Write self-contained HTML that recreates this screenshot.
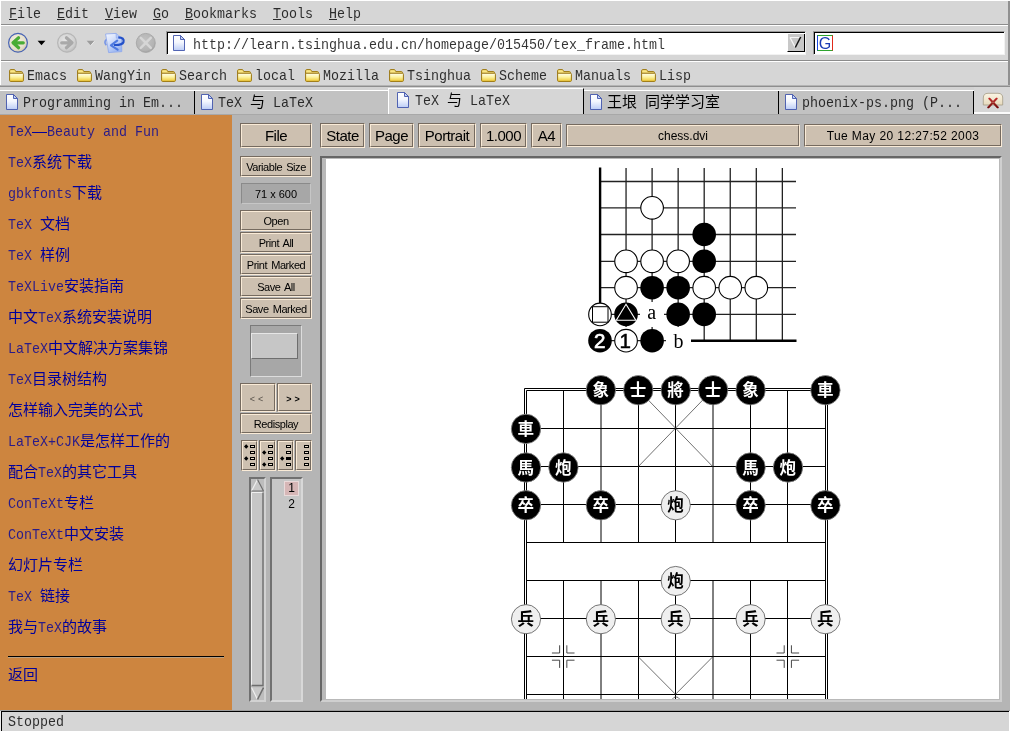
<!DOCTYPE html>
<html lang="zh"><head><meta charset="utf-8"><title>TeX 与 LaTeX</title>
<style>
*{margin:0;padding:0;box-sizing:border-box}
html,body{width:1010px;height:732px;overflow:hidden;background:#d6d6d6}
.t,.btn,.s,svg{will-change:transform}
body{position:relative;font-family:"Liberation Mono","Noto Serif CJK SC",monospace;font-size:16px;color:#000}
.a{position:absolute}
.t{position:absolute;white-space:pre;height:18px;line-height:18px;font-size:0}
.m{display:inline-block;opacity:.8;font:15px/18px "Liberation Mono",monospace;transform:scaleX(.8887);transform-origin:0 50%;white-space:pre;vertical-align:top;height:18px;overflow:visible}
.c{display:inline-block;position:relative;top:-2px;font:16px/18px "Liberation Sans","Noto Sans CJK SC",sans-serif;white-space:pre;vertical-align:top;height:18px;text-align:center;overflow:visible}
.u{text-decoration:underline}
.s{font-family:"Liberation Sans",sans-serif}
.btn{position:absolute;word-spacing:1.5px;background:#cdc0b0;border:1px solid;border-color:#756a5f #faebd7 #faebd7 #756a5f;font-family:"Liberation Sans",sans-serif;text-align:center;white-space:nowrap}
.btn i{position:absolute;left:0;top:0;right:0;bottom:0;border:1px solid;border-color:#faebd7 #756a5f #756a5f #faebd7;font-style:normal;display:block}
.lnk .m,.lnk .c{color:#00009c}
.q{font:700 16.5px "Liberation Sans","Noto Sans CJK SC",sans-serif}
</style></head>
<body>
<div class="a" style="left:0px;top:0px;width:1010px;height:1px;background:#fff;"></div>
<div class="a" style="left:0px;top:0px;width:1px;height:88px;background:#fff;"></div>
<div class="a" style="left:1008px;top:1px;width:2px;height:85px;background:#909090;"></div>
<div class="a" style="left:1px;top:24px;width:1007px;height:1px;background:#8c8c8c;"></div>
<div class="a" style="left:1px;top:25px;width:1007px;height:1px;background:#fff;"></div>
<div class="a" style="left:1px;top:60px;width:1007px;height:1px;background:#8c8c8c;"></div>
<div class="a" style="left:1px;top:61px;width:1007px;height:1px;background:#fff;"></div>
<div class="a" style="left:0px;top:85px;width:1010px;height:1px;background:#b4b4b4;"></div>
<div class="a" style="left:0px;top:86px;width:1010px;height:1px;background:#8e8e8e;"></div>
<div class="a" style="left:0px;top:87px;width:1010px;height:3px;background:#d3d3d3;"></div>
<div class="t " style="left:9px;top:6px"><span class="m" style="width:32px"><span class="u">F</span>ile</span></div>
<div class="t " style="left:57px;top:6px"><span class="m" style="width:32px"><span class="u">E</span>dit</span></div>
<div class="t " style="left:105px;top:6px"><span class="m" style="width:32px"><span class="u">V</span>iew</span></div>
<div class="t " style="left:153px;top:6px"><span class="m" style="width:16px"><span class="u">G</span>o</span></div>
<div class="t " style="left:185px;top:6px"><span class="m" style="width:72px"><span class="u">B</span>ookmarks</span></div>
<div class="t " style="left:273px;top:6px"><span class="m" style="width:40px"><span class="u">T</span>ools</span></div>
<div class="t " style="left:329px;top:6px"><span class="m" style="width:32px"><span class="u">H</span>elp</span></div>
<svg class="a" style="left:0;top:26px" width="170" height="34" viewBox="0 26 170 34">
<defs>
<radialGradient id="gb" cx="42%" cy="38%" r="65%"><stop offset="0" stop-color="#f6f2e4"/><stop offset=".7" stop-color="#e6dfca"/><stop offset="1" stop-color="#cfc6aa"/></radialGradient>
<radialGradient id="gg" cx="42%" cy="38%" r="65%"><stop offset="0" stop-color="#e6e6e6"/><stop offset=".7" stop-color="#d2d2d2"/><stop offset="1" stop-color="#bcbcbc"/></radialGradient>
<radialGradient id="gs" cx="45%" cy="40%" r="65%"><stop offset="0" stop-color="#c2c2c2"/><stop offset=".75" stop-color="#b4b4b4"/><stop offset="1" stop-color="#9c9c9c"/></radialGradient>
<linearGradient id="pg" x1="0" y1="0" x2="0" y2="1"><stop offset="0" stop-color="#fff"/><stop offset=".45" stop-color="#f4f7fe"/><stop offset="1" stop-color="#bccdf6"/></linearGradient>
<linearGradient id="fg" x1="0" y1="0" x2="0" y2="1"><stop offset="0" stop-color="#fffef0"/><stop offset=".45" stop-color="#fdf4a4"/><stop offset="1" stop-color="#f0c832"/></linearGradient>
<linearGradient id="gp" x1="0" y1="0" x2=".6" y2="1"><stop offset="0" stop-color="#f4f7ff"/><stop offset=".35" stop-color="#dbe5fc"/><stop offset="1" stop-color="#9cb6f0"/></linearGradient>
</defs>
<circle cx="18" cy="42.800" r="9.400" fill="url(#gb)" stroke="#4763b4" stroke-width="1.2"/>
<path d="M18.600 37.800 L13 42.800 L18.600 47.800 M13.500 42.800 H23.300" fill="none" stroke="#49ac35" stroke-width="3.200" stroke-linecap="round" stroke-linejoin="round"/>
<path d="M37.600 40.800h7.800l-3.900 4.500z" fill="#000"/>
<circle cx="67" cy="42.800" r="9.400" fill="url(#gg)" stroke="#b6b6b6" stroke-width="1.2"/>
<path d="M66.400 37.800 L72 42.800 L66.400 47.800 M71.500 42.800 H61.700" fill="none" stroke="#a9a9a9" stroke-width="3.200" stroke-linecap="round" stroke-linejoin="round"/>
<path d="M86.700 40.800h7.800l-3.900 4.500z" fill="#9c9c9c"/><path d="M94.500 41.300 L90.800 45.500" stroke="#f0f0f0" stroke-width=".8"/>
<g>
<path d="M105.600 34 L116 33.400 L121.500 38 L121.800 51.600 L108.600 52.600 Z" fill="url(#gp)" stroke="#8aa6ee" stroke-width=".8"/>
<path d="M116 33.400 L116.300 38.200 L121.500 38" fill="#b6c9f6" stroke="#8aa6ee" stroke-width=".6"/>
<path d="M106.300 39.500 Q103.600 42 106.300 45.300" fill="none" stroke="#7896e6" stroke-width="1.600"/>
<path d="M118.300 37.400 Q124.600 37.600 123.500 42 Q122.300 45.300 114 45" fill="none" stroke="#2351c9" stroke-width="2.200"/>
<path d="M117.200 40.600 L111 45.300 L117.600 49.700" fill="none" stroke="#4f7ae0" stroke-width="2.200" stroke-linejoin="round" stroke-linecap="round"/>
</g>
<circle cx="145.800" cy="42.900" r="9.500" fill="url(#gs)" stroke="#a2a2a2" stroke-width=".8"/>
<path d="M140.800 37.900 L150.800 47.900 M150.800 37.900 L140.800 47.900" stroke="#d6d6d6" stroke-width="2.500" stroke-linecap="round"/>
</svg>
<div class="a" style="left:166px;top:31px;width:640px;height:24px;background:#fff;border:1px solid;border-color:#9a9a9a #f2f2f2 #f2f2f2 #9a9a9a;box-shadow:inset 1px 1px 0 #000;"></div>
<svg class="a" style="left:173px;top:35px" width="12" height="16" viewBox="0 0 12 16"><path d="M.5 .5 H7.500 L11.500 4.500 V15.500 H.5 Z" fill="url(#pg)" stroke="#4256ac" stroke-width=".9"/><path d="M7.500 .5 V4.500 H11.500 Z" fill="#c4d2f6" stroke="#4256ac" stroke-width=".9" stroke-linejoin="round"/></svg>
<div class="t " style="left:193px;top:37px"><span class="m" style="width:472px">http://learn.tsinghua.edu.cn/homepage/015450/tex_frame.html</span></div>
<div class="a" style="left:787px;top:34px;width:18px;height:18px;background:#c8c8c8;border:1px solid;border-color:#c8c8c8 #000 #000 #fff;border-width:0 1px 1px 1px"></div>
<svg class="a" style="left:788px;top:34px" width="15" height="17" viewBox="788 34 15 17"><path d="M790 37.500 L795.300 47.500" stroke="#f6f6f6" stroke-width="1.3" fill="none"/><path d="M790 37.500 H800.500" stroke="#f6f6f6" stroke-width="1"/><path d="M800.700 37 L795.300 47.500" stroke="#111" stroke-width="1.5" fill="none"/></svg>
<div class="a" style="left:813px;top:31px;width:192px;height:24px;background:#fff;border:1px solid;border-color:#9a9a9a #f2f2f2 #f2f2f2 #9a9a9a;box-shadow:inset 1px 1px 0 #000;"></div>
<div class="a" style="left:817px;top:35px;width:16px;height:16px;background:#fff;border:1px solid;border-color:#2fa52f #e02a1a #2fa52f #1a49e0;font:16px/15px 'Liberation Sans',sans-serif;color:#1c3cb4;text-align:center">G</div>
<svg class="a" style="left:9px;top:69px" width="15" height="13" viewBox="0 0 15 13"><path d="M.6 3 V1.800 Q.6 .6 1.800 .6 H5 Q6 .6 6.300 1.500 L6.800 2.600 H12.500 Q13.400 2.600 13.400 3.600 V4.500 H.6 Z" fill="#fae684" stroke="#9a7610" stroke-width="1"/><path d="M.6 4.200 H13.400 Q14.400 4.200 14.400 5.200 V11.400 Q14.400 12.400 13.400 12.400 H1.600 Q.6 12.400 .6 11.400 Z" fill="url(#fg)" stroke="#9a7610" stroke-width="1"/></svg>
<div class="t " style="left:27px;top:68px"><span class="m" style="width:40px">Emacs</span></div>
<svg class="a" style="left:77px;top:69px" width="15" height="13" viewBox="0 0 15 13"><path d="M.6 3 V1.800 Q.6 .6 1.800 .6 H5 Q6 .6 6.300 1.500 L6.800 2.600 H12.500 Q13.400 2.600 13.400 3.600 V4.500 H.6 Z" fill="#fae684" stroke="#9a7610" stroke-width="1"/><path d="M.6 4.200 H13.400 Q14.400 4.200 14.400 5.200 V11.400 Q14.400 12.400 13.400 12.400 H1.600 Q.6 12.400 .6 11.400 Z" fill="url(#fg)" stroke="#9a7610" stroke-width="1"/></svg>
<div class="t " style="left:95px;top:68px"><span class="m" style="width:56px">WangYin</span></div>
<svg class="a" style="left:161px;top:69px" width="15" height="13" viewBox="0 0 15 13"><path d="M.6 3 V1.800 Q.6 .6 1.800 .6 H5 Q6 .6 6.300 1.500 L6.800 2.600 H12.500 Q13.400 2.600 13.400 3.600 V4.500 H.6 Z" fill="#fae684" stroke="#9a7610" stroke-width="1"/><path d="M.6 4.200 H13.400 Q14.400 4.200 14.400 5.200 V11.400 Q14.400 12.400 13.400 12.400 H1.600 Q.6 12.400 .6 11.400 Z" fill="url(#fg)" stroke="#9a7610" stroke-width="1"/></svg>
<div class="t " style="left:179px;top:68px"><span class="m" style="width:48px">Search</span></div>
<svg class="a" style="left:237px;top:69px" width="15" height="13" viewBox="0 0 15 13"><path d="M.6 3 V1.800 Q.6 .6 1.800 .6 H5 Q6 .6 6.300 1.500 L6.800 2.600 H12.500 Q13.400 2.600 13.400 3.600 V4.500 H.6 Z" fill="#fae684" stroke="#9a7610" stroke-width="1"/><path d="M.6 4.200 H13.400 Q14.400 4.200 14.400 5.200 V11.400 Q14.400 12.400 13.400 12.400 H1.600 Q.6 12.400 .6 11.400 Z" fill="url(#fg)" stroke="#9a7610" stroke-width="1"/></svg>
<div class="t " style="left:255px;top:68px"><span class="m" style="width:40px">local</span></div>
<svg class="a" style="left:305px;top:69px" width="15" height="13" viewBox="0 0 15 13"><path d="M.6 3 V1.800 Q.6 .6 1.800 .6 H5 Q6 .6 6.300 1.500 L6.800 2.600 H12.500 Q13.400 2.600 13.400 3.600 V4.500 H.6 Z" fill="#fae684" stroke="#9a7610" stroke-width="1"/><path d="M.6 4.200 H13.400 Q14.400 4.200 14.400 5.200 V11.400 Q14.400 12.400 13.400 12.400 H1.600 Q.6 12.400 .6 11.400 Z" fill="url(#fg)" stroke="#9a7610" stroke-width="1"/></svg>
<div class="t " style="left:323px;top:68px"><span class="m" style="width:56px">Mozilla</span></div>
<svg class="a" style="left:389px;top:69px" width="15" height="13" viewBox="0 0 15 13"><path d="M.6 3 V1.800 Q.6 .6 1.800 .6 H5 Q6 .6 6.300 1.500 L6.800 2.600 H12.500 Q13.400 2.600 13.400 3.600 V4.500 H.6 Z" fill="#fae684" stroke="#9a7610" stroke-width="1"/><path d="M.6 4.200 H13.400 Q14.400 4.200 14.400 5.200 V11.400 Q14.400 12.400 13.400 12.400 H1.600 Q.6 12.400 .6 11.400 Z" fill="url(#fg)" stroke="#9a7610" stroke-width="1"/></svg>
<div class="t " style="left:407px;top:68px"><span class="m" style="width:64px">Tsinghua</span></div>
<svg class="a" style="left:481px;top:69px" width="15" height="13" viewBox="0 0 15 13"><path d="M.6 3 V1.800 Q.6 .6 1.800 .6 H5 Q6 .6 6.300 1.500 L6.800 2.600 H12.500 Q13.400 2.600 13.400 3.600 V4.500 H.6 Z" fill="#fae684" stroke="#9a7610" stroke-width="1"/><path d="M.6 4.200 H13.400 Q14.400 4.200 14.400 5.200 V11.400 Q14.400 12.400 13.400 12.400 H1.600 Q.6 12.400 .6 11.400 Z" fill="url(#fg)" stroke="#9a7610" stroke-width="1"/></svg>
<div class="t " style="left:499px;top:68px"><span class="m" style="width:48px">Scheme</span></div>
<svg class="a" style="left:557px;top:69px" width="15" height="13" viewBox="0 0 15 13"><path d="M.6 3 V1.800 Q.6 .6 1.800 .6 H5 Q6 .6 6.300 1.500 L6.800 2.600 H12.500 Q13.400 2.600 13.400 3.600 V4.500 H.6 Z" fill="#fae684" stroke="#9a7610" stroke-width="1"/><path d="M.6 4.200 H13.400 Q14.400 4.200 14.400 5.200 V11.400 Q14.400 12.400 13.400 12.400 H1.600 Q.6 12.400 .6 11.400 Z" fill="url(#fg)" stroke="#9a7610" stroke-width="1"/></svg>
<div class="t " style="left:575px;top:68px"><span class="m" style="width:56px">Manuals</span></div>
<svg class="a" style="left:641px;top:69px" width="15" height="13" viewBox="0 0 15 13"><path d="M.6 3 V1.800 Q.6 .6 1.800 .6 H5 Q6 .6 6.300 1.500 L6.800 2.600 H12.500 Q13.400 2.600 13.400 3.600 V4.500 H.6 Z" fill="#fae684" stroke="#9a7610" stroke-width="1"/><path d="M.6 4.200 H13.400 Q14.400 4.200 14.400 5.200 V11.400 Q14.400 12.400 13.400 12.400 H1.600 Q.6 12.400 .6 11.400 Z" fill="url(#fg)" stroke="#9a7610" stroke-width="1"/></svg>
<div class="t " style="left:659px;top:68px"><span class="m" style="width:32px">Lisp</span></div>
<div class="a" style="left:0px;top:90px;width:974px;height:1px;background:#fff;"></div>
<div class="a" style="left:0px;top:91px;width:1010px;height:24px;background:#c2c2c2;"></div>
<div class="a" style="left:974px;top:87px;width:36px;height:27px;background:#d6d6d6;"></div>
<div class="a" style="left:973px;top:112px;width:37px;height:2px;background:#fbfbfb;"></div>
<div class="a" style="left:0px;top:114px;width:1010px;height:1px;background:#a8a8a8;"></div>
<div class="a" style="left:388px;top:88px;width:196px;height:26px;background:#d6d6d6;border-left:1px solid #fff;border-top:1px solid #fff;border-right:1px solid #000;"></div>
<div class="a" style="left:194px;top:91px;width:1px;height:23px;background:#000;"></div>
<div class="a" style="left:778px;top:91px;width:1px;height:23px;background:#000;"></div>
<div class="a" style="left:973px;top:91px;width:1px;height:23px;background:#000;"></div>
<svg class="a" style="left:6px;top:94px" width="12" height="16" viewBox="0 0 12 16"><path d="M.5 .5 H7.500 L11.500 4.500 V15.500 H.5 Z" fill="url(#pg)" stroke="#4256ac" stroke-width=".9"/><path d="M7.500 .5 V4.500 H11.500 Z" fill="#c4d2f6" stroke="#4256ac" stroke-width=".9" stroke-linejoin="round"/></svg>
<div class="t " style="left:23px;top:95px"><span class="m" style="width:160px">Programming in Em...</span></div>
<svg class="a" style="left:201px;top:94px" width="12" height="16" viewBox="0 0 12 16"><path d="M.5 .5 H7.500 L11.500 4.500 V15.500 H.5 Z" fill="url(#pg)" stroke="#4256ac" stroke-width=".9"/><path d="M7.500 .5 V4.500 H11.500 Z" fill="#c4d2f6" stroke="#4256ac" stroke-width=".9" stroke-linejoin="round"/></svg>
<div class="t " style="left:218px;top:95px"><span class="m" style="width:32px">TeX </span><span class="c" style="width:15px;font-size:15px">与</span><span class="m" style="width:48px"> LaTeX</span></div>
<svg class="a" style="left:397px;top:92px" width="12" height="16" viewBox="0 0 12 16"><path d="M.5 .5 H7.500 L11.500 4.500 V15.500 H.5 Z" fill="url(#pg)" stroke="#4256ac" stroke-width=".9"/><path d="M7.500 .5 V4.500 H11.500 Z" fill="#c4d2f6" stroke="#4256ac" stroke-width=".9" stroke-linejoin="round"/></svg>
<div class="t " style="left:415px;top:93px"><span class="m" style="width:32px">TeX </span><span class="c" style="width:15px;font-size:15px">与</span><span class="m" style="width:48px"> LaTeX</span></div>
<svg class="a" style="left:590px;top:94px" width="12" height="16" viewBox="0 0 12 16"><path d="M.5 .5 H7.500 L11.500 4.500 V15.500 H.5 Z" fill="url(#pg)" stroke="#4256ac" stroke-width=".9"/><path d="M7.500 .5 V4.500 H11.500 Z" fill="#c4d2f6" stroke="#4256ac" stroke-width=".9" stroke-linejoin="round"/></svg>
<div class="t " style="left:607px;top:95px"><span class="c" style="width:30px;font-size:15px">王垠</span><span class="m" style="width:8px"> </span><span class="c" style="width:75px;font-size:15px">同学学习室</span></div>
<svg class="a" style="left:785px;top:94px" width="12" height="16" viewBox="0 0 12 16"><path d="M.5 .5 H7.500 L11.500 4.500 V15.500 H.5 Z" fill="url(#pg)" stroke="#4256ac" stroke-width=".9"/><path d="M7.500 .5 V4.500 H11.500 Z" fill="#c4d2f6" stroke="#4256ac" stroke-width=".9" stroke-linejoin="round"/></svg>
<div class="t " style="left:802px;top:95px"><span class="m" style="width:160px">phoenix-ps.png (P...</span></div>
<svg class="a" style="left:982px;top:92px" width="22" height="19" viewBox="0 0 22 19"><defs><linearGradient id="cb" x1="0" y1="0" x2="0" y2="1"><stop offset="0" stop-color="#fbf5e4"/><stop offset="1" stop-color="#e6dabd"/></linearGradient><linearGradient id="cx" x1="0" y1="0" x2="0" y2="1"><stop offset="0" stop-color="#c02626"/><stop offset="1" stop-color="#6c0404"/></linearGradient></defs><path d="M1.300 13 V6 Q1.300 1.300 6 1.300 H16 Q20.700 1.300 20.700 6 V13 Z" fill="url(#cb)" stroke="#a39a84" stroke-width=".8"/><path d="M6.800 7 L15.200 16 L16.300 16 L16.300 15 L7.800 6 L6.800 6Z M15.200 7 L6.800 16 L5.700 16 L5.700 15 L14.200 6 L15.200 6Z" fill="url(#cx)" stroke="url(#cx)" stroke-width=".7" stroke-linejoin="round"/></svg>
<div class="a" style="left:0px;top:115px;width:232px;height:595px;background:#cd853f;"></div>
<a class="t lnk" style="left:8px;top:124px"><span class="m" style="width:24px">TeX</span><span class="c" style="width:15px;font-size:15px">—</span><span class="m" style="width:112px">Beauty and Fun</span></a>
<a class="t lnk" style="left:8px;top:155px"><span class="m" style="width:24px">TeX</span><span class="c" style="width:60px;font-size:15px">系统下载</span></a>
<a class="t lnk" style="left:8px;top:186px"><span class="m" style="width:64px">gbkfonts</span><span class="c" style="width:30px;font-size:15px">下载</span></a>
<a class="t lnk" style="left:8px;top:217px"><span class="m" style="width:32px">TeX </span><span class="c" style="width:30px;font-size:15px">文档</span></a>
<a class="t lnk" style="left:8px;top:248px"><span class="m" style="width:32px">TeX </span><span class="c" style="width:30px;font-size:15px">样例</span></a>
<a class="t lnk" style="left:8px;top:279px"><span class="m" style="width:56px">TeXLive</span><span class="c" style="width:60px;font-size:15px">安装指南</span></a>
<a class="t lnk" style="left:8px;top:310px"><span class="c" style="width:30px;font-size:15px">中文</span><span class="m" style="width:24px">TeX</span><span class="c" style="width:90px;font-size:15px">系统安装说明</span></a>
<a class="t lnk" style="left:8px;top:341px"><span class="m" style="width:40px">LaTeX</span><span class="c" style="width:120px;font-size:15px">中文解决方案集锦</span></a>
<a class="t lnk" style="left:8px;top:372px"><span class="m" style="width:24px">TeX</span><span class="c" style="width:75px;font-size:15px">目录树结构</span></a>
<a class="t lnk" style="left:8px;top:403px"><span class="c" style="width:135px;font-size:15px">怎样输入完美的公式</span></a>
<a class="t lnk" style="left:8px;top:434px"><span class="m" style="width:72px">LaTeX+CJK</span><span class="c" style="width:90px;font-size:15px">是怎样工作的</span></a>
<a class="t lnk" style="left:8px;top:465px"><span class="c" style="width:30px;font-size:15px">配合</span><span class="m" style="width:24px">TeX</span><span class="c" style="width:75px;font-size:15px">的其它工具</span></a>
<a class="t lnk" style="left:8px;top:496px"><span class="m" style="width:56px">ConTeXt</span><span class="c" style="width:30px;font-size:15px">专栏</span></a>
<a class="t lnk" style="left:8px;top:527px"><span class="m" style="width:56px">ConTeXt</span><span class="c" style="width:60px;font-size:15px">中文安装</span></a>
<a class="t lnk" style="left:8px;top:558px"><span class="c" style="width:75px;font-size:15px">幻灯片专栏</span></a>
<a class="t lnk" style="left:8px;top:589px"><span class="m" style="width:32px">TeX </span><span class="c" style="width:30px;font-size:15px">链接</span></a>
<a class="t lnk" style="left:8px;top:620px"><span class="c" style="width:30px;font-size:15px">我与</span><span class="m" style="width:24px">TeX</span><span class="c" style="width:45px;font-size:15px">的故事</span></a>
<div class="a" style="left:8px;top:656px;width:216px;height:1px;background:#000;"></div>
<div class="a" style="left:8px;top:657px;width:216px;height:1px;background:#b9a184;"></div>
<a class="t lnk" style="left:8px;top:668px"><span class="c" style="width:30px;font-size:15px">返回</span></a>
<div class="a" style="left:0px;top:710px;width:1010px;height:1px;background:#9c9c9c;"></div>
<div class="a" style="left:0px;top:711px;width:1010px;height:1px;background:#000;"></div>
<div class="a" style="left:0px;top:712px;width:1010px;height:19px;background:#d6d6d6;"></div>
<div class="a" style="left:1px;top:712px;width:1px;height:19px;background:#000;"></div>
<div class="a" style="left:0px;top:711px;width:1px;height:21px;background:#eee;"></div>
<div class="a" style="left:0px;top:731px;width:1010px;height:1px;background:#fff;"></div>
<div class="a" style="left:1009px;top:711px;width:1px;height:21px;background:#fff;"></div>
<div class="t " style="left:8px;top:714px"><span class="m" style="width:56px">Stopped</span></div>
<div class="a" style="left:232px;top:115px;width:778px;height:595px;background:#b5b5b5;"></div>
<div class="btn" style="left:240px;top:123px;width:72px;height:25px;font-size:15px;line-height:23px;letter-spacing:-0.5px;"><i></i><span style="position:relative;top:0px">File</span></div>
<div class="btn" style="left:320px;top:123px;width:45px;height:25px;font-size:15px;line-height:23px;letter-spacing:-0.5px;"><i></i><span style="position:relative;top:0px">State</span></div>
<div class="btn" style="left:369px;top:123px;width:45px;height:25px;font-size:15px;line-height:23px;letter-spacing:-0.5px;"><i></i><span style="position:relative;top:0px">Page</span></div>
<div class="btn" style="left:418px;top:123px;width:58px;height:25px;font-size:15px;line-height:23px;letter-spacing:-0.5px;"><i></i><span style="position:relative;top:0px">Portrait</span></div>
<div class="btn" style="left:480px;top:123px;width:47px;height:25px;font-size:15px;line-height:23px;letter-spacing:-0.5px;"><i></i><span style="position:relative;top:0px">1.000</span></div>
<div class="btn" style="left:531px;top:123px;width:31px;height:25px;font-size:15px;line-height:23px;letter-spacing:-0.5px;"><i></i><span style="position:relative;top:0px">A4</span></div>
<div class="btn" style="left:566px;top:124px;width:234px;height:23px;font-size:12px;line-height:21px;letter-spacing:0px;"><i></i><span style="position:relative;top:1px">chess.dvi</span></div>
<div class="btn" style="left:804px;top:124px;width:198px;height:23px;font-size:12px;line-height:21px;letter-spacing:0.4px;word-spacing:0;"><i></i><span style="position:relative;top:1px">Tue May 20 12:27:52 2003</span></div>
<div class="btn" style="left:240px;top:156px;width:72px;height:21px;font-size:11px;line-height:19px;letter-spacing:-0.45px;"><i></i><span style="position:relative;top:1px">Variable Size</span></div>
<div class="a s" style="left:241px;top:183px;width:70px;height:21px;background:#a7a7a7;border:1px solid;border-color:#8a8a8a #c6c6c6 #c6c6c6 #8a8a8a;font-size:11px;line-height:21px;text-align:center">71 x 600</div>
<div class="btn" style="left:240px;top:210px;width:72px;height:21px;font-size:11px;line-height:19px;letter-spacing:-0.45px;"><i></i><span style="position:relative;top:1px">Open</span></div>
<div class="btn" style="left:240px;top:232px;width:72px;height:21px;font-size:11px;line-height:19px;letter-spacing:-0.45px;"><i></i><span style="position:relative;top:1px">Print All</span></div>
<div class="btn" style="left:240px;top:254px;width:72px;height:21px;font-size:11px;line-height:19px;letter-spacing:-0.45px;"><i></i><span style="position:relative;top:1px">Print Marked</span></div>
<div class="btn" style="left:240px;top:276px;width:72px;height:21px;font-size:11px;line-height:19px;letter-spacing:-0.45px;"><i></i><span style="position:relative;top:1px">Save All</span></div>
<div class="btn" style="left:240px;top:298px;width:72px;height:21px;font-size:11px;line-height:19px;letter-spacing:-0.45px;"><i></i><span style="position:relative;top:1px">Save Marked</span></div>
<div class="a" style="left:250px;top:325px;width:52px;height:52px;background:#a7a7a7;border:1px solid;border-color:#7a7a7a #dcdcdc #dcdcdc #7a7a7a;"></div>
<div class="a" style="left:251px;top:333px;width:47px;height:26px;background:#c6c6c6;border:1px solid;border-color:#e6e6e6 #6e6e6e #6e6e6e #e6e6e6;"></div>
<div class="btn" style="left:240px;top:383px;width:36px;height:29px;font-size:9px;line-height:27px;letter-spacing:3px;color:#575049;"><i></i><span style="position:relative;top:2px">&lt;&lt;</span></div>
<div class="btn" style="left:277px;top:383px;width:35px;height:29px;font-size:9px;line-height:27px;letter-spacing:3px;font-weight:bold;"><i></i><span style="position:relative;top:2px">&gt;&gt;</span></div>
<div class="btn" style="left:240px;top:413px;width:72px;height:21px;font-size:11px;line-height:19px;letter-spacing:-0.45px;"><i></i><span style="position:relative;top:1px">Redisplay</span></div>
<div class="btn" style="left:241px;top:440px;width:17px;height:31px;font-size:11px;line-height:29px;letter-spacing:0px;"><i></i><span style="position:relative;top:1px"></span></div>
<svg class="a" style="left:241px;top:440px" width="17" height="31" viewBox="0 0 17 31"><rect x="9.5" y="5.5" width="4" height="2" fill="#e9dccb" stroke="#000" stroke-width="1"/><rect x="9.5" y="11.5" width="4" height="2" fill="#e9dccb" stroke="#000" stroke-width="1"/><rect x="9.5" y="17.5" width="4" height="2" fill="#e9dccb" stroke="#000" stroke-width="1"/><rect x="9.5" y="23.5" width="4" height="2" fill="#e9dccb" stroke="#000" stroke-width="1"/><path d="M3 6.5 L5.200 4.3 L7.400 6.5 L5.200 8.7 Z" fill="#000"/><path d="M3 18.5 L5.200 16.3 L7.400 18.5 L5.200 20.7 Z" fill="#000"/></svg>
<div class="btn" style="left:259px;top:440px;width:17px;height:31px;font-size:11px;line-height:29px;letter-spacing:0px;"><i></i><span style="position:relative;top:1px"></span></div>
<svg class="a" style="left:259px;top:440px" width="17" height="31" viewBox="0 0 17 31"><rect x="9.5" y="5.5" width="4" height="2" fill="#e9dccb" stroke="#000" stroke-width="1"/><rect x="9.5" y="11.5" width="4" height="2" fill="#e9dccb" stroke="#000" stroke-width="1"/><rect x="9.5" y="17.5" width="4" height="2" fill="#e9dccb" stroke="#000" stroke-width="1"/><rect x="9.5" y="23.5" width="4" height="2" fill="#e9dccb" stroke="#000" stroke-width="1"/><path d="M3 12.5 L5.200 10.3 L7.400 12.5 L5.200 14.7 Z" fill="#000"/><path d="M3 24.5 L5.200 22.3 L7.400 24.5 L5.200 26.7 Z" fill="#000"/></svg>
<div class="btn" style="left:277px;top:440px;width:17px;height:31px;font-size:11px;line-height:29px;letter-spacing:0px;"><i></i><span style="position:relative;top:1px"></span></div>
<svg class="a" style="left:277px;top:440px" width="17" height="31" viewBox="0 0 17 31"><rect x="9.5" y="5.5" width="4" height="2" fill="#e9dccb" stroke="#000" stroke-width="1"/><rect x="9.5" y="11.5" width="4" height="2" fill="#e9dccb" stroke="#000" stroke-width="1"/><rect x="9.5" y="17.5" width="4" height="2" fill="#000" stroke="#000" stroke-width="1"/><rect x="9.5" y="23.5" width="4" height="2" fill="#e9dccb" stroke="#000" stroke-width="1"/><path d="M3 18.5 L5.200 16.3 L7.400 18.5 L5.200 20.7 Z" fill="#000"/></svg>
<div class="btn" style="left:295px;top:440px;width:17px;height:31px;font-size:11px;line-height:29px;letter-spacing:0px;"><i></i><span style="position:relative;top:1px"></span></div>
<svg class="a" style="left:295px;top:440px" width="17" height="31" viewBox="0 0 17 31"><rect x="9.5" y="5.5" width="4" height="2" fill="#e9dccb" stroke="#000" stroke-width="1"/><rect x="9.5" y="11.5" width="4" height="2" fill="#e9dccb" stroke="#000" stroke-width="1"/><rect x="9.5" y="17.5" width="4" height="2" fill="#e9dccb" stroke="#000" stroke-width="1"/><rect x="9.5" y="23.5" width="4" height="2" fill="#e9dccb" stroke="#000" stroke-width="1"/></svg>
<div class="a" style="left:249px;top:477px;width:17px;height:225px;background:#bdbdbd;border:2px solid;border-color:#707070 #d2d2d2 #d2d2d2 #707070;"></div>
<svg class="a" style="left:251px;top:479px" width="13" height="221" viewBox="0 0 13 221"><path d="M6.500 .5 L.5 12 H12.500 Z" fill="#c8c8c8"/><path d="M6.500 .5 L.5 12" stroke="#f0f0f0" stroke-width="1.2"/><path d="M6.500 .5 L12.500 12 H.5" stroke="#6e6e6e" stroke-width="1.2" fill="none"/><rect x="0" y="13" width="13" height="194" fill="#c6c6c6"/><path d="M.5 207 V13.500 H12" stroke="#f0f0f0" fill="none"/><path d="M12 13.500 V206.500 H.5" stroke="#6e6e6e" stroke-width="1.4" fill="none"/><path d="M.5 208.500 H12.500 L6.500 220.500 Z" fill="#c8c8c8"/><path d="M.5 208.500 L6.500 220.500" stroke="#f0f0f0" stroke-width="1.2"/><path d="M12.500 208.500 L6.500 220.500" stroke="#6e6e6e" stroke-width="1.6"/></svg>
<div class="a" style="left:270px;top:477px;width:33px;height:225px;background:#c6c6c6;border:2px solid;border-color:#707070 #d8d8d8 #d8d8d8 #707070;"></div>
<div class="a s" style="left:284px;top:481px;width:15px;height:15px;background:#d6b6b6;border:1px solid #eadada;font-size:12px;line-height:13px;text-align:center">1</div>
<div class="a s" style="left:284px;top:497px;width:15px;height:13px;font-size:12px;line-height:15px;text-align:center">2</div>
<div class="a" style="left:320px;top:156px;width:682px;height:546px;background:#b9b9b9;border:2px solid;border-color:#666 #cfcfcf #cfcfcf #666;"></div>
<div class="a" style="left:326px;top:159px;width:673px;height:540px;background:#fff;"></div>
<svg class="a" style="left:326px;top:159px" width="673" height="540" viewBox="326 159 673 540" font-family="Liberation Serif, Noto Serif CJK SC, serif"><line x1="626.05" y1="168" x2="626.05" y2="327" stroke="#222" stroke-width="1.3"/><line x1="652.1" y1="168" x2="652.1" y2="327" stroke="#222" stroke-width="1.3"/><line x1="678.15" y1="168" x2="678.15" y2="327" stroke="#222" stroke-width="1.3"/><line x1="704.2" y1="168" x2="704.2" y2="340.7" stroke="#222" stroke-width="1.3"/><line x1="730.25" y1="168" x2="730.25" y2="340.7" stroke="#222" stroke-width="1.3"/><line x1="756.3" y1="168" x2="756.3" y2="340.7" stroke="#222" stroke-width="1.3"/><line x1="782.35" y1="168" x2="782.35" y2="340.7" stroke="#222" stroke-width="1.3"/><line x1="600" y1="181.5" x2="796" y2="181.5" stroke="#222" stroke-width="1.3"/><line x1="600" y1="207.8" x2="796" y2="207.8" stroke="#222" stroke-width="1.3"/><line x1="600" y1="234.5" x2="796" y2="234.5" stroke="#222" stroke-width="1.3"/><line x1="600" y1="261.3" x2="796" y2="261.3" stroke="#222" stroke-width="1.3"/><line x1="600" y1="287.7" x2="796" y2="287.7" stroke="#222" stroke-width="1.3"/><line x1="600" y1="314.4" x2="796" y2="314.4" stroke="#222" stroke-width="1.3"/><line x1="600" y1="340.7" x2="666" y2="340.7" stroke="#222" stroke-width="1.3"/><line x1="652.1" y1="326" x2="652.1" y2="341" stroke="#222" stroke-width="1.3"/><line x1="600.1" y1="167.500" x2="600.1" y2="303" stroke="#000" stroke-width="2.4"/><line x1="691" y1="340.7" x2="796.5" y2="340.7" stroke="#000" stroke-width="2.6"/><rect x="640" y="302" width="24" height="25" fill="#fff"/><rect x="666" y="328" width="24" height="25" fill="#fff"/><circle cx="652.1" cy="207.8" r="11.3" fill="#fff" stroke="#000" stroke-width="1.1"/><circle cx="704.2" cy="234.5" r="11.8" fill="#000"/><circle cx="626.05" cy="261.3" r="11.3" fill="#fff" stroke="#000" stroke-width="1.1"/><circle cx="652.1" cy="261.3" r="11.3" fill="#fff" stroke="#000" stroke-width="1.1"/><circle cx="678.15" cy="261.3" r="11.3" fill="#fff" stroke="#000" stroke-width="1.1"/><circle cx="704.2" cy="261.3" r="11.8" fill="#000"/><circle cx="626.05" cy="287.7" r="11.3" fill="#fff" stroke="#000" stroke-width="1.1"/><circle cx="652.1" cy="287.7" r="11.8" fill="#000"/><circle cx="678.15" cy="287.7" r="11.8" fill="#000"/><circle cx="704.2" cy="287.7" r="11.3" fill="#fff" stroke="#000" stroke-width="1.1"/><circle cx="730.25" cy="287.7" r="11.3" fill="#fff" stroke="#000" stroke-width="1.1"/><circle cx="756.3" cy="287.7" r="11.3" fill="#fff" stroke="#000" stroke-width="1.1"/><circle cx="600" cy="314.4" r="11.3" fill="#fff" stroke="#000" stroke-width="1.1"/><circle cx="626.05" cy="314.4" r="11.8" fill="#000"/><circle cx="678.15" cy="314.4" r="11.8" fill="#000"/><circle cx="704.2" cy="314.4" r="11.8" fill="#000"/><circle cx="600" cy="340.7" r="11.8" fill="#000"/><circle cx="626.05" cy="340.7" r="11.3" fill="#fff" stroke="#000" stroke-width="1.1"/><circle cx="652.1" cy="340.7" r="11.8" fill="#000"/><rect x="592.500" y="306.700" width="15.500" height="15.500" fill="none" stroke="#000" stroke-width="1"/><path d="M626 304.300 L635.800 320.300 H616.300 Z" fill="none" stroke="#fff" stroke-width="1.1"/><text x="651.8" y="319.3" font-size="20" text-anchor="middle">a</text><text x="678.6" y="347.5" font-size="20" text-anchor="middle">b</text><text x="599.8" y="348.2" font-size="20.500" font-family="Liberation Sans, sans-serif" fill="#fff" stroke="#fff" stroke-width=".7" text-anchor="middle">2</text><text x="625.3" y="348.2" font-size="20.500" font-family="Liberation Sans, sans-serif" fill="#000" stroke="#000" stroke-width=".5" text-anchor="middle">1</text><path d="M524.500 699 V388.500 H827.500 V699" fill="none" stroke="#000" stroke-width="1"/><path d="M526.500 699 V390.500 H825.500 V699" fill="none" stroke="#000" stroke-width="1"/><line x1="526" y1="428.5" x2="825.5" y2="428.5" stroke="#000" stroke-width="1"/><line x1="526" y1="466.5" x2="825.5" y2="466.5" stroke="#000" stroke-width="1"/><line x1="526" y1="504.5" x2="825.5" y2="504.5" stroke="#000" stroke-width="1"/><line x1="526" y1="542.5" x2="825.5" y2="542.5" stroke="#000" stroke-width="1"/><line x1="526" y1="580.5" x2="825.5" y2="580.5" stroke="#000" stroke-width="1"/><line x1="526" y1="618.5" x2="825.5" y2="618.5" stroke="#000" stroke-width="1"/><line x1="526" y1="656.5" x2="825.5" y2="656.5" stroke="#000" stroke-width="1"/><line x1="526" y1="694.5" x2="825.5" y2="694.5" stroke="#000" stroke-width="1"/><line x1="563.5" y1="390" x2="563.5" y2="542.5" stroke="#000" stroke-width="1"/><line x1="563.5" y1="580.5" x2="563.5" y2="699" stroke="#000" stroke-width="1"/><line x1="601" y1="390" x2="601" y2="542.5" stroke="#000" stroke-width="1"/><line x1="601" y1="580.5" x2="601" y2="699" stroke="#000" stroke-width="1"/><line x1="638.5" y1="390" x2="638.5" y2="542.5" stroke="#000" stroke-width="1"/><line x1="638.5" y1="580.5" x2="638.5" y2="699" stroke="#000" stroke-width="1"/><line x1="675.5" y1="390" x2="675.5" y2="542.5" stroke="#000" stroke-width="1"/><line x1="675.5" y1="580.5" x2="675.5" y2="699" stroke="#000" stroke-width="1"/><line x1="713" y1="390" x2="713" y2="542.5" stroke="#000" stroke-width="1"/><line x1="713" y1="580.5" x2="713" y2="699" stroke="#000" stroke-width="1"/><line x1="750.5" y1="390" x2="750.5" y2="542.5" stroke="#000" stroke-width="1"/><line x1="750.5" y1="580.5" x2="750.5" y2="699" stroke="#000" stroke-width="1"/><line x1="787.5" y1="390" x2="787.5" y2="542.5" stroke="#000" stroke-width="1"/><line x1="787.5" y1="580.5" x2="787.5" y2="699" stroke="#000" stroke-width="1"/><path d="M638.09 389.5 L712.95 466.8 M712.95 389.5 L638.09 466.8" stroke="#333" stroke-width=".7"/><path d="M638.09 656.6 L675.52 694.3 M712.95 656.6 L675.52 694.3" stroke="#333" stroke-width=".7"/><path d="M672.500 699 A4 4 0 0 1 679.500 699" fill="none" stroke="#333" stroke-width=".7"/><path d="M551.93 653 H559.63 V645.3" fill="none" stroke="#333" stroke-width=".9"/><path d="M551.93 660.2 H559.63 V667.9" fill="none" stroke="#333" stroke-width=".9"/><path d="M574.53 653 H566.83 V645.3" fill="none" stroke="#333" stroke-width=".9"/><path d="M574.53 660.2 H566.83 V667.9" fill="none" stroke="#333" stroke-width=".9"/><path d="M776.51 653 H784.21 V645.3" fill="none" stroke="#333" stroke-width=".9"/><path d="M776.51 660.2 H784.21 V667.9" fill="none" stroke="#333" stroke-width=".9"/><path d="M799.11 653 H791.41 V645.3" fill="none" stroke="#333" stroke-width=".9"/><path d="M799.11 660.2 H791.41 V667.9" fill="none" stroke="#333" stroke-width=".9"/><circle cx="600.86" cy="390.2" r="14.7" fill="#000" stroke="#8c8c8c" stroke-width=".8"/><text x="600.66" y="396.2" class="q" fill="#fff" text-anchor="middle">象</text><circle cx="638.29" cy="390.2" r="14.7" fill="#000" stroke="#8c8c8c" stroke-width=".8"/><text x="638.09" y="396.2" class="q" fill="#fff" text-anchor="middle">士</text><circle cx="675.72" cy="390.2" r="14.7" fill="#000" stroke="#8c8c8c" stroke-width=".8"/><text x="675.52" y="396.2" class="q" fill="#fff" text-anchor="middle">將</text><circle cx="713.15" cy="390.2" r="14.7" fill="#000" stroke="#8c8c8c" stroke-width=".8"/><text x="712.95" y="396.2" class="q" fill="#fff" text-anchor="middle">士</text><circle cx="750.58" cy="390.2" r="14.7" fill="#000" stroke="#8c8c8c" stroke-width=".8"/><text x="750.38" y="396.2" class="q" fill="#fff" text-anchor="middle">象</text><circle cx="825.44" cy="390.2" r="14.7" fill="#000" stroke="#8c8c8c" stroke-width=".8"/><text x="825.24" y="396.2" class="q" fill="#fff" text-anchor="middle">車</text><circle cx="526" cy="428.9" r="14.7" fill="#000" stroke="#8c8c8c" stroke-width=".8"/><text x="525.8" y="434.9" class="q" fill="#fff" text-anchor="middle">車</text><circle cx="526" cy="467.5" r="14.7" fill="#000" stroke="#8c8c8c" stroke-width=".8"/><text x="525.8" y="473.5" class="q" fill="#fff" text-anchor="middle">馬</text><circle cx="563.43" cy="467.5" r="14.7" fill="#000" stroke="#8c8c8c" stroke-width=".8"/><text x="563.23" y="473.5" class="q" fill="#fff" text-anchor="middle">炮</text><circle cx="750.58" cy="467.5" r="14.7" fill="#000" stroke="#8c8c8c" stroke-width=".8"/><text x="750.38" y="473.5" class="q" fill="#fff" text-anchor="middle">馬</text><circle cx="788.01" cy="467.5" r="14.7" fill="#000" stroke="#8c8c8c" stroke-width=".8"/><text x="787.81" y="473.5" class="q" fill="#fff" text-anchor="middle">炮</text><circle cx="526" cy="505.3" r="14.7" fill="#000" stroke="#8c8c8c" stroke-width=".8"/><text x="525.8" y="511.3" class="q" fill="#fff" text-anchor="middle">卒</text><circle cx="600.86" cy="505.3" r="14.7" fill="#000" stroke="#8c8c8c" stroke-width=".8"/><text x="600.66" y="511.3" class="q" fill="#fff" text-anchor="middle">卒</text><circle cx="750.58" cy="505.3" r="14.7" fill="#000" stroke="#8c8c8c" stroke-width=".8"/><text x="750.38" y="511.3" class="q" fill="#fff" text-anchor="middle">卒</text><circle cx="825.44" cy="505.3" r="14.7" fill="#000" stroke="#8c8c8c" stroke-width=".8"/><text x="825.24" y="511.3" class="q" fill="#fff" text-anchor="middle">卒</text><circle cx="675.72" cy="505.3" r="14.6" fill="#efefef" stroke="#555" stroke-width=".8"/><text x="675.52" y="511.3" class="q" fill="#000" text-anchor="middle">炮</text><circle cx="675.72" cy="581" r="14.6" fill="#efefef" stroke="#555" stroke-width=".8"/><text x="675.52" y="587" class="q" fill="#000" text-anchor="middle">炮</text><circle cx="526" cy="619.2" r="14.6" fill="#efefef" stroke="#555" stroke-width=".8"/><text x="525.8" y="625.2" class="q" fill="#000" text-anchor="middle">兵</text><circle cx="600.86" cy="619.2" r="14.6" fill="#efefef" stroke="#555" stroke-width=".8"/><text x="600.66" y="625.2" class="q" fill="#000" text-anchor="middle">兵</text><circle cx="675.72" cy="619.2" r="14.6" fill="#efefef" stroke="#555" stroke-width=".8"/><text x="675.52" y="625.2" class="q" fill="#000" text-anchor="middle">兵</text><circle cx="750.58" cy="619.2" r="14.6" fill="#efefef" stroke="#555" stroke-width=".8"/><text x="750.38" y="625.2" class="q" fill="#000" text-anchor="middle">兵</text><circle cx="825.44" cy="619.2" r="14.6" fill="#efefef" stroke="#555" stroke-width=".8"/><text x="825.24" y="625.2" class="q" fill="#000" text-anchor="middle">兵</text></svg>
</body></html>
